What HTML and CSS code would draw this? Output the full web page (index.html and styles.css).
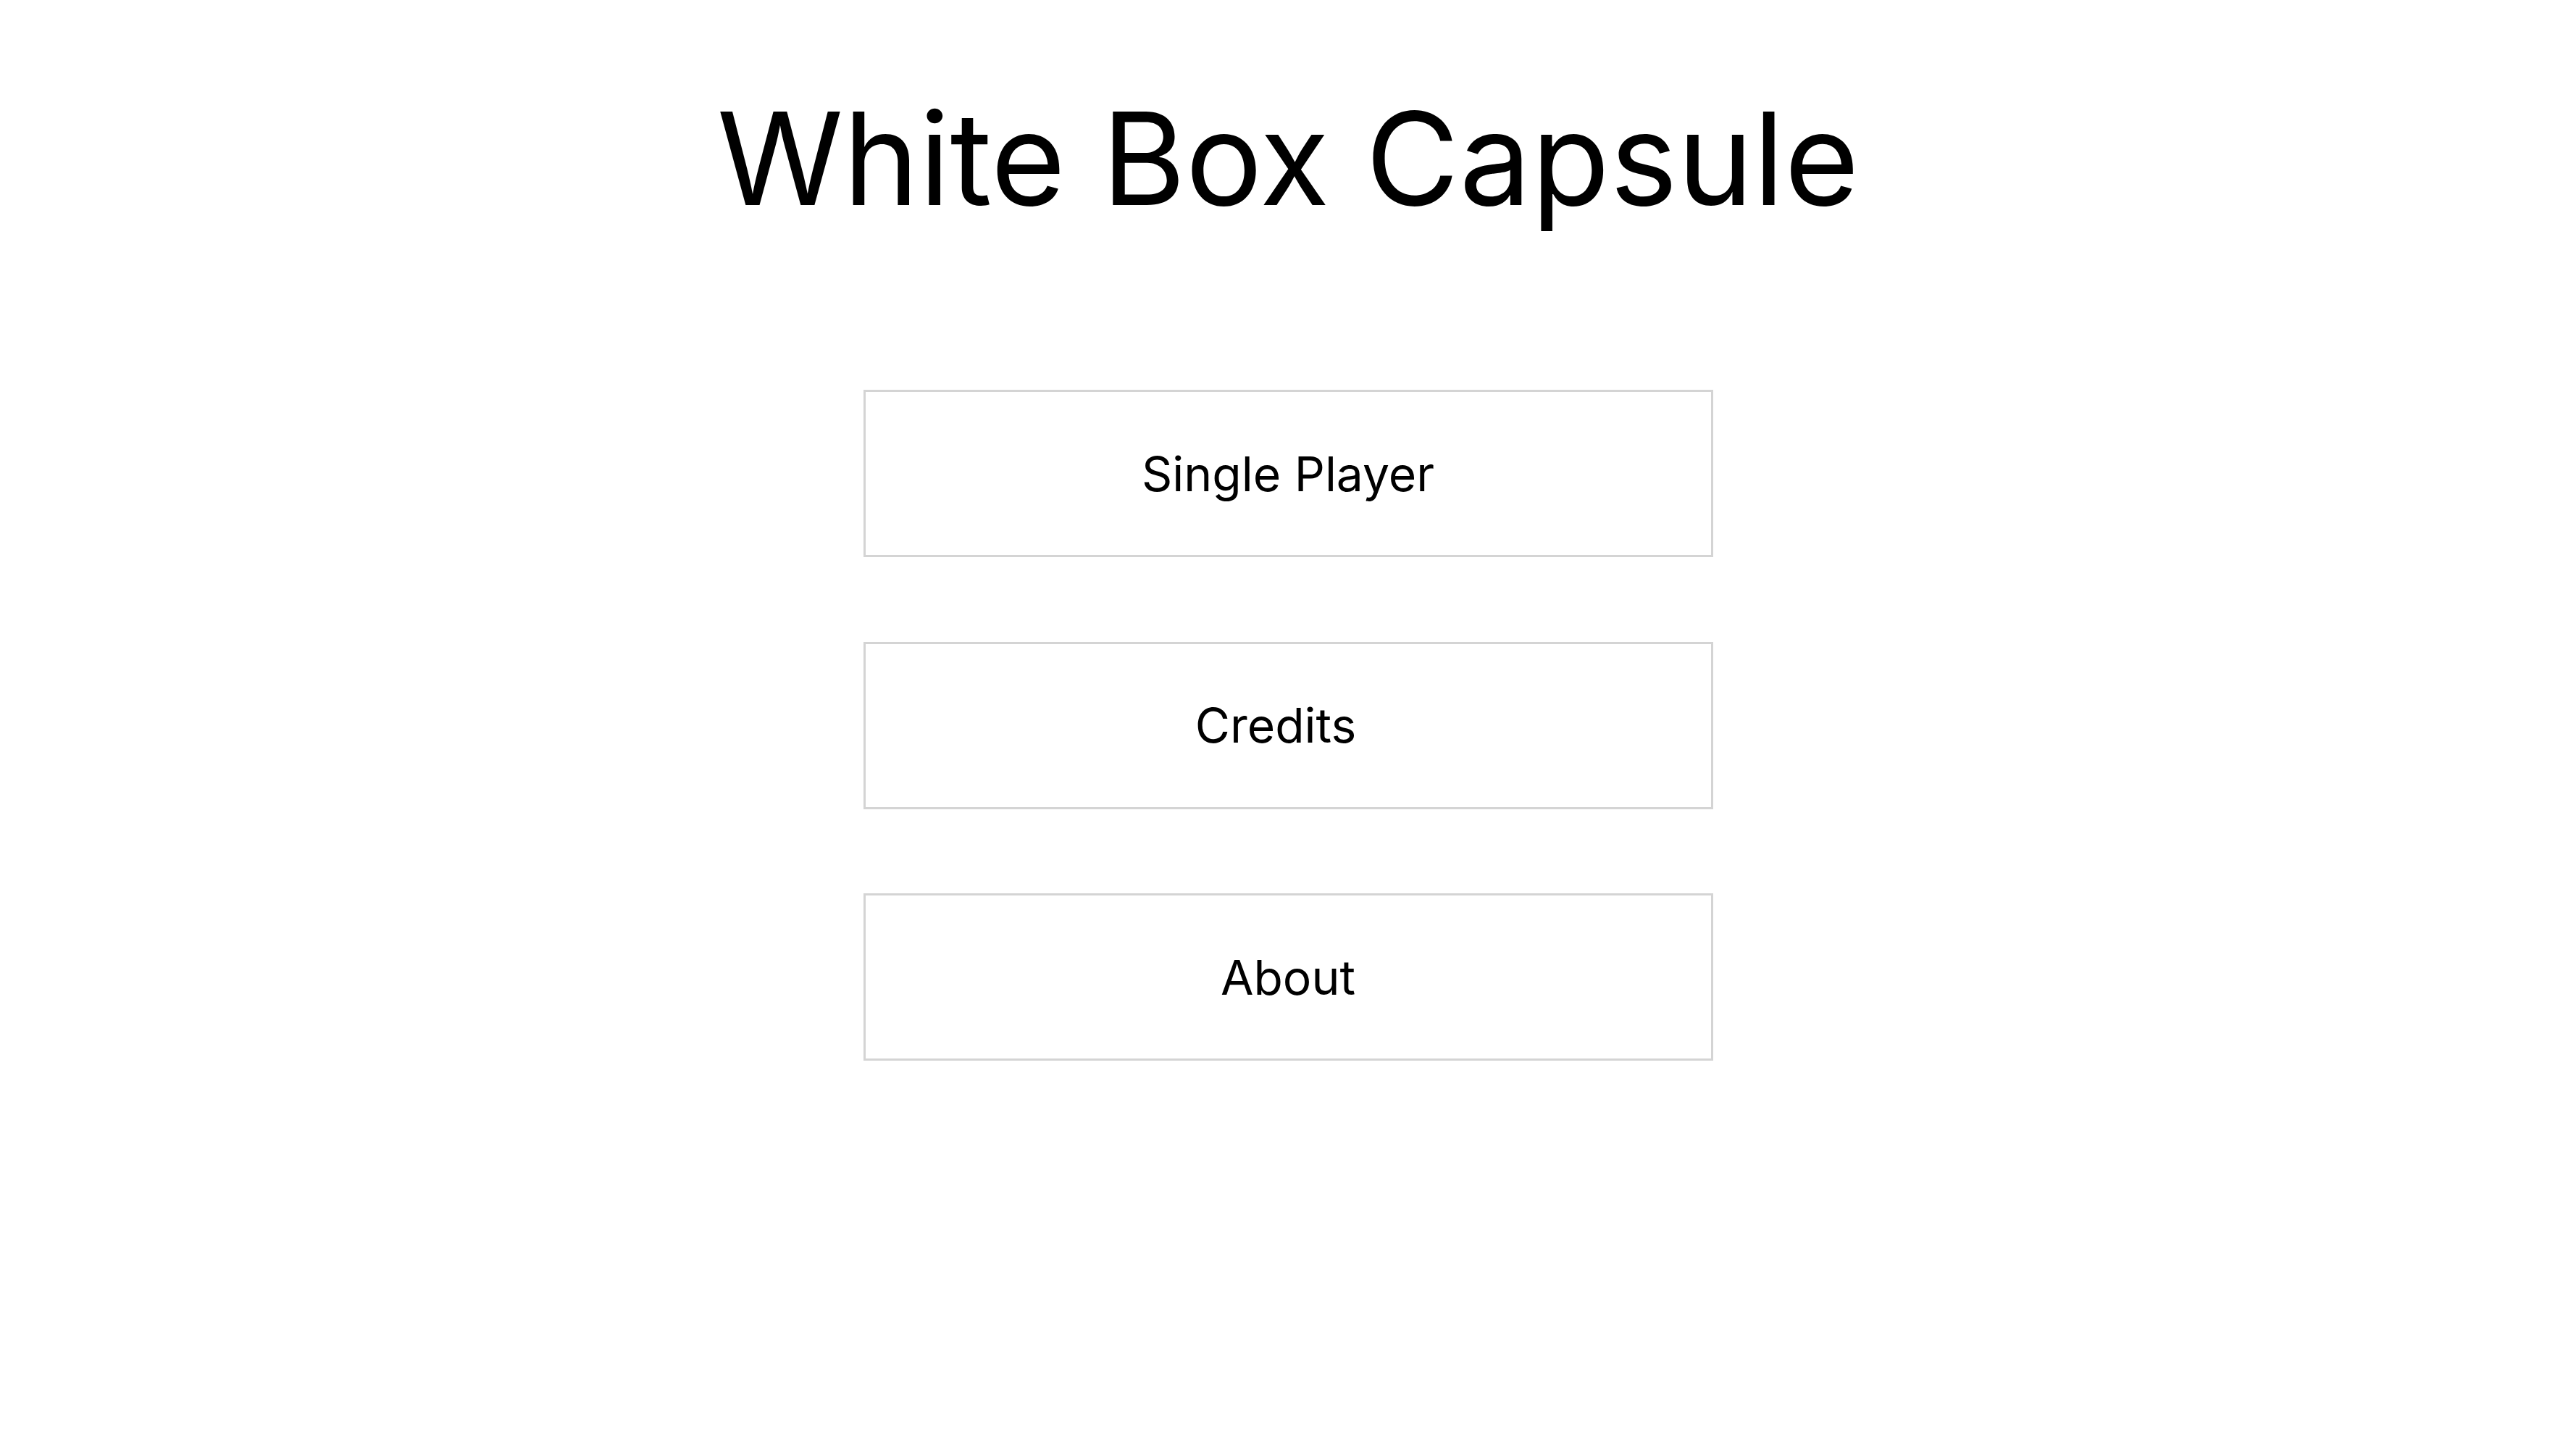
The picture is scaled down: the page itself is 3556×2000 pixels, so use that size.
FILE: index.html
```html
<!DOCTYPE html>
<html>
<head>
<meta charset="UTF-8">
<title>White Box Capsule</title>
<link rel="stylesheet" href="styles.css">
</head>
<body>
<div class="menu">
	<h1 class="title">White Box Capsule</h1>
	<ul class="menu-list">
		<li><a class="menu-btn" href="#">Single Player</a></li>
		<li><a class="menu-btn menu-btn-credits" href="#">Credits</a></li>
		<li><a class="menu-btn" href="#">About</a></li>
	</ul>
</div>
</body>
</html>
```

FILE: styles.css
```css
body,h1,ul,li{margin:0;padding:0;}
ul,li{list-style:none;}
a{color:#000;text-decoration:none;}

html,body{
	width:100%;
	height:100%;
	background:#fff;
}
body{
	font-family:Inter,"Noto Sans",sans-serif;
	color:#000;
}

.menu{
	display:flex;
	flex-direction:column;
	align-items:center;
	padding-top:110px;
}
.title{
	font-size:177px;
	font-weight:400;
	line-height:218px;
}
.menu-list{
	display:flex;
	flex-direction:column;
	gap:116.5px;
	margin-top:210px;
}
.menu-btn{
	display:flex;
	align-items:center;
	justify-content:center;
	box-sizing:border-box;
	width:1173px;
	height:231px;
	border:3px solid #d4d4d4;
	font-size:66px;
	line-height:1;
}
.menu-btn-credits{
	padding-right:34px;
}
```
